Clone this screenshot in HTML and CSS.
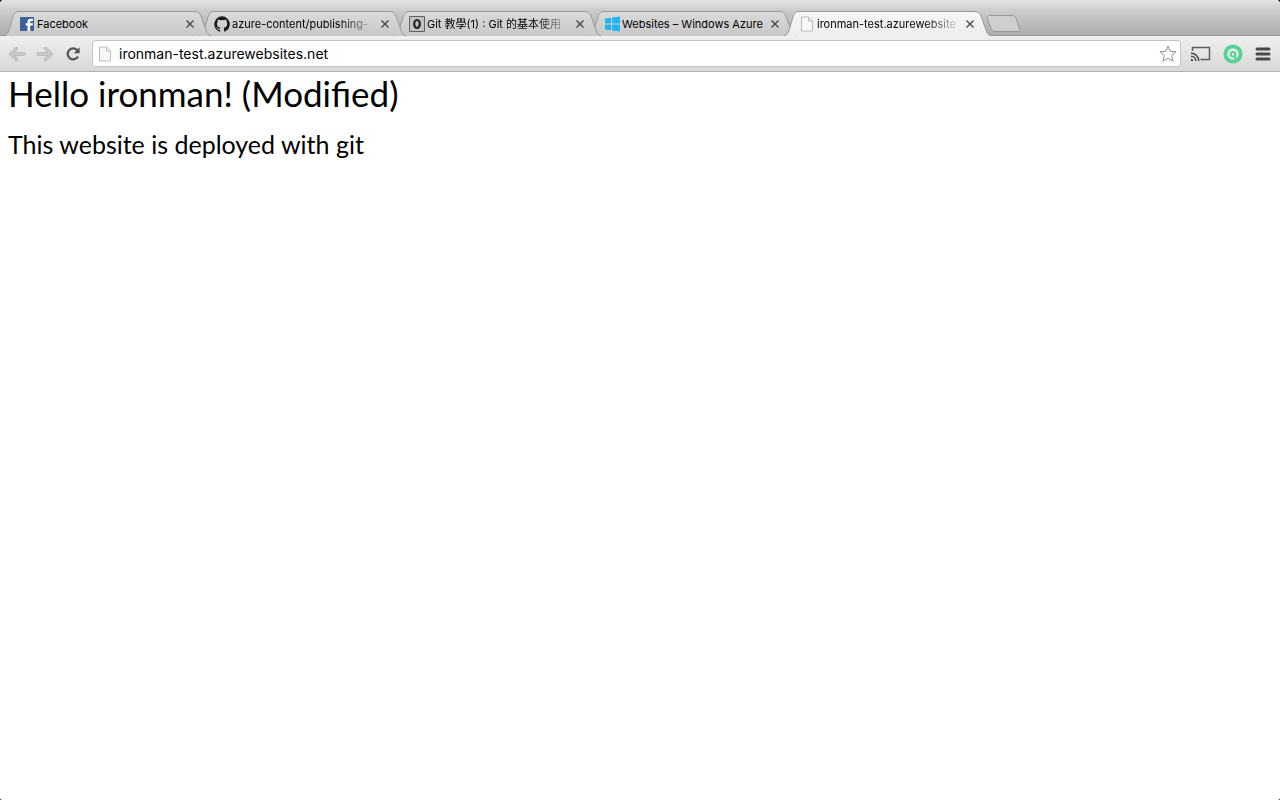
FILE: index.html
```html
<!DOCTYPE html>
<html lang="zh-Hant">
<head>
<meta charset="utf-8">
<title>ironman-test.azurewebsites.net</title>
<link rel="stylesheet" href="styles.css">
</head>
<body>
<svg class="defs" aria-hidden="true">
  <defs>
    <linearGradient id="tab-fill" x1="0" y1="0" x2="0" y2="1"><stop offset="0" stop-color="#dadada"/><stop offset="1" stop-color="#c8c8c8"/></linearGradient>
    <linearGradient id="active-fill" x1="0" y1="0" x2="0" y2="1"><stop offset="0" stop-color="#f6f6f6"/><stop offset="1" stop-color="#eeeeee"/></linearGradient>
    <symbol id="tab-shape" viewBox="0 0 208 26">
      <path d="M0 25C3 24 4 22 5 19L9 6C10 2 12 .5 15 .5H190C194 .5 196 2 197 5L202 19C203 22 204 24 207 25"/>
    </symbol>
    <symbol id="close" viewBox="0 0 12 12"><path d="M2.500 2.500l7 7M9.500 2.500l-7 7" fill="none" stroke="#444" stroke-width="1.300"/></symbol>
    <symbol id="page" viewBox="0 0 16 16"><path d="M2.500 1h7l4 4v10h-11z" fill="#f7f7f7" stroke="#bcbcbc"/><path d="M9.500 1v4h4" fill="none" stroke="#bcbcbc"/></symbol>
  </defs>
</svg>
<header>
  <nav class="tabs" aria-label="Tabs">
    <div class="tab tab-1">
      <svg class="shape"><use href="#tab-shape"/></svg>
      <svg class="icon" viewBox="0 0 16 16"><path fill="#3f5f9f" d="M1 1h14v14H1z"/><path fill="#fff" d="M8.500 15V9.500H6.700V7.300h1.800V5.800C8.500 3.700 9.700 2.700 11.500 2.700H14v2.200h-1.500c-1 0-1.300.4-1.300 1.200v1.200H14l-.3 2.200h-2.500V15z"/></svg>
      <button class="title">Facebook</button>
      <button class="close" aria-label="Close tab"><svg><use href="#close"/></svg></button>
    </div>
    <div class="tab tab-2">
      <svg class="shape"><use href="#tab-shape"/></svg>
      <svg class="icon" viewBox="0 0 16 16"><path fill="#181818" fill-rule="evenodd" d="M8 .2a8 8 0 0 0-2.500 15.500c.4.100.5-.2.500-.4v-1.500c-2.200.5-2.700-1-2.700-1-.4-.9-.9-1.100-.9-1.100-.7-.5.1-.5.1-.5.800.1 1.200.800 1.200.8.700 1.200 1.900.9 2.300.7.100-.5.300-.9.500-1.100C4.700 11.400 3 10.700 3 7.700c0-.9.300-1.600.8-2.200-.1-.2-.4-1 .1-2.100 0 0 .7-.2 2.200.8a7.500 7.500 0 0 1 4 0c1.500-1 2.200-.8 2.200-.8.4 1.100.2 1.900.1 2.100.5.600.8 1.300.8 2.200 0 3-1.800 3.700-3.600 3.900.3.300.5.800.5 1.500v2.200c0 .2.100.5.500.4A8 8 0 0 0 8 .2z"/></svg>
      <button class="title faded">azure-content/publishing-</button>
      <button class="close" aria-label="Close tab"><svg><use href="#close"/></svg></button>
    </div>
    <div class="tab tab-3">
      <svg class="shape"><use href="#tab-shape"/></svg>
      <svg class="icon" viewBox="0 0 16 16"><path fill="#c2c2c2" stroke="#606060" d="M.5.5h15v15H.5z"/><ellipse cx="8" cy="8" rx="2.800" ry="4" fill="none" stroke="#222" stroke-width="2.200"/></svg>
      <button class="title faded">Git 教學(1) : Git 的基本使用</button>
      <button class="close" aria-label="Close tab"><svg><use href="#close"/></svg></button>
    </div>
    <div class="tab tab-4">
      <svg class="shape"><use href="#tab-shape"/></svg>
      <svg class="icon" viewBox="0 0 16 16"><path fill="#22b5ee" d="M1 2.500L7 1.700v5.800H1zM8 1.500L16 .4v7.100H8zM1 8.500h6v5.800l-6-.8zM8 8.500h8v7.100l-8-1.100z"/></svg>
      <button class="title">Websites – Windows Azure</button>
      <button class="close" aria-label="Close tab"><svg><use href="#close"/></svg></button>
    </div>
    <div class="tab active">
      <svg class="shape"><use href="#tab-shape"/></svg>
      <svg class="icon"><use href="#page"/></svg>
      <button class="title faded">ironman-test.azurewebsite</button>
      <button class="close" aria-label="Close tab"><svg><use href="#close"/></svg></button>
    </div>
    <button class="new-tab" aria-label="New tab"><svg viewBox="0 0 34 18"><path d="M4 .5h22c2 0 3 1 4 3l3 9c1 3 0 4-2 4H10c-3 0-4-1-5-3L1.500 4C.8 2 1.500.5 4 .5z" fill="#cfcfcf" stroke="#979797"/></svg></button>
  </nav>
  <div class="toolbar">
    <button aria-label="Back"><svg width="18" height="16" viewBox="0 0 18 16"><path d="M8.500 2.500L3 8l5.500 5.500M3 8h13" fill="none" stroke="#b4b4b4" stroke-width="3.400" stroke-linecap="round"/><path d="M8.500 2.500L3 8l5.500 5.500M3 8h13" fill="none" stroke="#cacaca" stroke-width="2" stroke-linecap="round"/></svg></button>
    <button aria-label="Forward"><svg width="18" height="16" viewBox="0 0 18 16"><path d="M9.500 2.500L15 8l-5.500 5.500M15 8H2" fill="none" stroke="#b4b4b4" stroke-width="3.400" stroke-linecap="round"/><path d="M9.500 2.500L15 8l-5.500 5.500M15 8H2" fill="none" stroke="#cacaca" stroke-width="2" stroke-linecap="round"/></svg></button>
    <button aria-label="Reload"><svg width="18" height="16" viewBox="0 0 18 16"><path d="M13.300 4.200A5.500 5.500 0 1 0 14 10.500" fill="none" stroke="#555" stroke-width="2.300"/><path d="M15.600 1.300v6H9.700z" fill="#555"/></svg></button>
    <div class="omnibox">
      <svg class="icon"><use href="#page"/></svg>
      <input type="text" aria-label="Address" value="ironman-test.azurewebsites.net" spellcheck="false">
      <button aria-label="Bookmark this page"><svg width="18" height="18" viewBox="0 0 20 20"><path d="M10 1l2.500 5.900 6.500.5-4.900 4.200 1.600 6.400-5.700-3.500L4.300 18l1.600-6.400L1 7.400l6.500-.5z" fill="#fff" stroke="#858585" stroke-linejoin="round"/></svg></button>
    </div>
    <div class="actions">
      <button aria-label="Cast"><svg width="20" height="16" viewBox="0 0 20 16"><path d="M1.500 5V1.500h17v12H9.500" fill="none" stroke="#5e5e5e" stroke-width="1.500"/><path d="M0 7.200a7.800 7.800 0 0 1 7.800 7.800M0 10.200a4.800 4.800 0 0 1 4.800 4.800" fill="none" stroke="#444" stroke-width="1.400"/><path d="M0 12.700a2.300 2.300 0 0 1 2.300 2.300H0z" fill="#444"/></svg></button>
      <button aria-label="Extension"><svg width="20" height="20" viewBox="0 0 20 20"><circle cx="10" cy="10" r="9.600" fill="#56d394"/><circle cx="10" cy="10" r="5.700" fill="#e6efea"/><path d="M12.300 10v6" stroke="#56d394" stroke-width="2"/><circle cx="10" cy="10.300" r="2.300" fill="#e6efea" stroke="#56d394" stroke-width="1.900"/></svg></button>
      <button aria-label="Menu"><svg width="16" height="14" viewBox="0 0 16 14"><path d="M2 2h12M2 7h12M2 12h12" stroke="#484848" stroke-width="3" stroke-linecap="round"/></svg></button>
    </div>
  </div>
</header>
<main>
  <h1>Hello ironman! (Modified)</h1>
  <h2>This website is deployed with git</h2>
</main>
</body>
</html>
```
FILE: styles.css
```css
* { box-sizing: border-box; }
html { background: #000; min-height: 100%; display: flex; }
body {
  margin: 0;
  flex: 1;
  min-height: 100vh;
  background: #fff;
  border-radius: 4px 4px 2px 2px;
  overflow: hidden;
  color: #000;
  font-family: Inter, "Noto Sans CJK TC", sans-serif;
}
.defs { position: absolute; width: 0; height: 0; }
button { border: 0; padding: 0; background: none; font: inherit; color: inherit; }
svg { display: block; }
.tabs {
  display: flex;
  position: relative;
  padding: 11px 4px 0;
  height: 36px;
  background: linear-gradient(#e4e4e4, #cccccc 30%, #adadad);
  border-bottom: 1px solid #999;
}
.tab {
  position: relative;
  flex: 0 1 195px;
  height: 25px;
  padding-left: 15px;
  display: flex;
  align-items: center;
  isolation: isolate;
}
.tab-1 { z-index: 4; }
.tab-2 { z-index: 3; }
.tab-3 { z-index: 2; }
.tab-4 { z-index: 1; }
.tab.active { z-index: 5; }
.shape {
  position: absolute;
  z-index: -1;
  left: 0;
  top: 0;
  width: 208px;
  height: 26px;
  fill: url(#tab-fill);
  stroke: #999;
}
.active .shape { fill: url(#active-fill); }
.icon { width: 16px; height: 16px; flex: none; }
.title {
  width: 145px;
  margin-left: 2px;
  font-size: 11px;
  line-height: 18px;
  text-align: left;
  white-space: nowrap;
}
.faded { mask-image: linear-gradient(90deg, #000 108px, transparent); }
.close { margin-left: 2px; }
.close svg { width: 12px; height: 12px; }
.new-tab { margin: 4px 0 0 7px; align-self: flex-start; }
.new-tab svg { width: 34px; height: 18px; }
.toolbar {
  display: flex;
  align-items: center;
  gap: 10px;
  height: 36px;
  padding: 0 9px 0 8px;
  background: linear-gradient(#f0f0f0, #d8d8d8);
  border-bottom: 1px solid #b0b0b0;
}
.omnibox {
  flex: 1;
  display: flex;
  align-items: center;
  height: 27px;
  padding: 0 3px 0 4px;
  background: #fff;
  border: 1px solid #c4c4c4;
  border-radius: 3px;
}
.omnibox input {
  flex: 1;
  min-width: 0;
  padding: 0;
  margin-left: 6px;
  border: 0;
  outline: 0;
  background: none;
  color: #000;
  font: 14px/20px Inter, sans-serif;
}
.actions { display: flex; align-items: center; gap: 12px; }
main { padding: 0 8px; font-family: Lato, sans-serif; }
h1, h2 { margin: 0; font-weight: 400; }
h1 { font-size: 35px; line-height: 42px; }
h2 { margin-top: 14px; font-size: 25px; line-height: 32px; }
```
